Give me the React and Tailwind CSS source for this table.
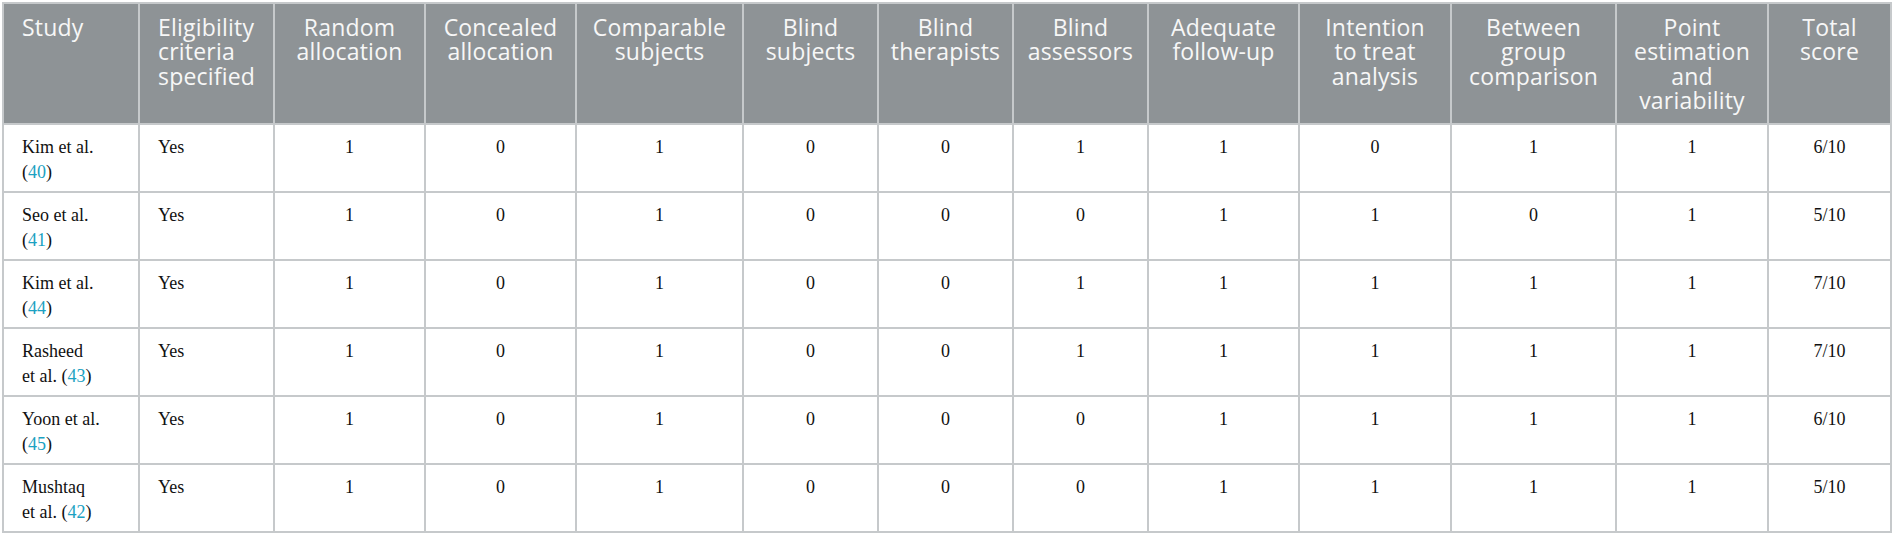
import React from 'react';

const headers = [
  { label: ['Study'], align: 'left' },
  { label: ['Eligibility', 'criteria', 'specified'], align: 'left' },
  { label: ['Random', 'allocation'] },
  { label: ['Concealed', 'allocation'] },
  { label: ['Comparable', 'subjects'] },
  { label: ['Blind', 'subjects'] },
  { label: ['Blind', 'therapists'] },
  { label: ['Blind', 'assessors'] },
  { label: ['Adequate', 'follow-up'] },
  { label: ['Intention', 'to treat', 'analysis'] },
  { label: ['Between', 'group', 'comparison'] },
  { label: ['Point', 'estimation', 'and', 'variability'] },
  { label: ['Total', 'score'] },
];

// column widths measured off the reference, borders included
const widths = [136, 135, 151, 151, 167, 135, 135, 135, 151, 152, 165, 152, 123];

const rows = [
  { study: ['Kim et al.', ''], ref: '40', scores: [1, 0, 1, 0, 0, 1, 1, 0, 1, 1], total: '6/10' },
  { study: ['Seo et al.', ''], ref: '41', scores: [1, 0, 1, 0, 0, 0, 1, 1, 0, 1], total: '5/10' },
  { study: ['Kim et al.', ''], ref: '44', scores: [1, 0, 1, 0, 0, 1, 1, 1, 1, 1], total: '7/10' },
  { study: ['Rasheed', 'et al. '], ref: '43', scores: [1, 0, 1, 0, 0, 1, 1, 1, 1, 1], total: '7/10' },
  { study: ['Yoon et al.', ''], ref: '45', scores: [1, 0, 1, 0, 0, 0, 1, 1, 1, 1], total: '6/10' },
  { study: ['Mushtaq', 'et al. '], ref: '42', scores: [1, 0, 1, 0, 0, 0, 1, 1, 1, 1], total: '5/10' },
];

const Ref = ({ n }) => (
  <>
    (<span className="text-[#1ba1c2]">{n}</span>)
  </>
);

export default function App() {
  return (
    <div className="bg-white w-[1897px] h-[533px] pt-[2px] pl-[2px]">
      <table className="table-fixed border-collapse w-[1890px]">
        <colgroup>
          {widths.map((w, i) => (
            <col key={i} style={{ width: `${w}px` }} />
          ))}
        </colgroup>
        <thead>
          <tr className="h-[121px] bg-[#8e9396]">
            {headers.map((h, i) => (
              <th
                key={i}
                className={`border-2 border-[#c6c9cb] align-top pt-[11px] font-normal text-[23px] leading-[24.3px] tracking-[0.2px] text-[#f7f7f7] font-['Open_Sans',sans-serif] whitespace-nowrap ${
                  h.align === 'left' ? 'text-left pl-[18px] pr-[4px]' : 'text-center px-[2px]'
                }`}
              >
                {h.label.map((l, j) => (
                  <React.Fragment key={j}>
                    {j > 0 && <br />}
                    {l}
                  </React.Fragment>
                ))}
              </th>
            ))}
          </tr>
        </thead>
        <tbody className="font-['Liberation_Serif',serif] text-[18px] leading-[25px] text-[#111]">
          {rows.map((r, i) => (
            <tr key={i} className="h-[68px]">
              <td className="border-2 border-[#c6c9cb] align-top pt-[10px] pl-[18px] pr-[4px] whitespace-nowrap">
                {r.study[0]}
                <br />
                {r.study[1]}
                <Ref n={r.ref} />
              </td>
              <td className="border-2 border-[#c6c9cb] align-top pt-[10px] pl-[18px]">Yes</td>
              {r.scores.map((s, j) => (
                <td key={j} className="border-2 border-[#c6c9cb] align-top pt-[10px] text-center">
                  {s}
                </td>
              ))}
              <td className="border-2 border-[#c6c9cb] align-top pt-[10px] text-center">{r.total}</td>
            </tr>
          ))}
        </tbody>
      </table>
    </div>
  );
}
